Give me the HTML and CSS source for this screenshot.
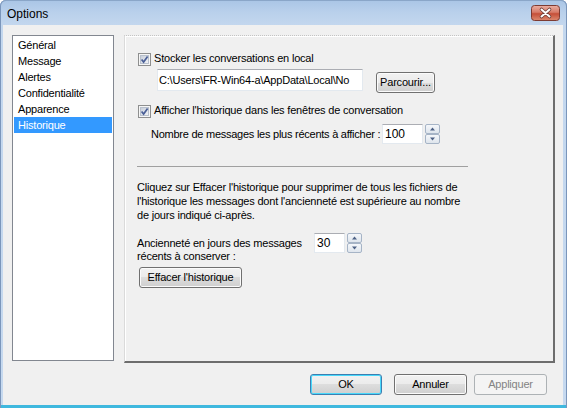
FILE: index.html
```html
<!DOCTYPE html>
<html>
<head>
<meta charset="utf-8">
<link rel="stylesheet" href="styles.css">
</head>
<body>
<div class="window">
  <div class="titlebar">
    <span class="title">Options</span>
    <span class="close">
      <svg width="29" height="16" viewBox="0 0 29 16">
        <defs>
          <linearGradient id="cg" x1="0" y1="0" x2="0" y2="1">
            <stop offset="0" stop-color="#eab0a4"/>
            <stop offset="0.45" stop-color="#d77b68"/>
            <stop offset="0.55" stop-color="#c54f38"/>
            <stop offset="1" stop-color="#dc8a70"/>
          </linearGradient>
        </defs>
        <rect x="0.5" y="0.5" width="28" height="15" rx="3" fill="url(#cg)" stroke="#7d3b32"/>
        <path d="M10.5 4.5 L18.5 11.5 M18.5 4.5 L10.5 11.5" stroke="#6a3a35" stroke-width="3.6" stroke-linecap="round"/>
        <path d="M10.5 4.5 L18.5 11.5 M18.5 4.5 L10.5 11.5" stroke="#ffffff" stroke-width="2" stroke-linecap="round"/>
      </svg>
    </span>
  </div>
  <div class="client">
    <div class="main">
      <ul class="list">
        <li>Général</li>
        <li>Message</li>
        <li>Alertes</li>
        <li>Confidentialité</li>
        <li>Apparence</li>
        <li class="sel">Historique</li>
      </ul>
      <div class="panel">
        <div class="chk-row first">
          <svg class="chk" width="13" height="13" viewBox="0 0 13 13">
            <defs>
              <linearGradient id="kg1" x1="0" y1="0" x2="1" y2="1">
                <stop offset="0" stop-color="#c6cdd8"/>
                <stop offset="1" stop-color="#f3f5f8"/>
              </linearGradient>
            </defs>
            <rect x="0.5" y="0.5" width="12" height="12" fill="#f6f6f6" stroke="#8e8f8f"/>
            <rect x="2.5" y="2.5" width="8" height="8" fill="url(#kg1)" stroke="#b8c0cc"/>
            <path d="M3.6 6.4 L5.6 9 L9.6 3.4" stroke="#4a5f97" stroke-width="1.7" fill="none"/>
          </svg>
          <span class="lbl">Stocker les conversations en local</span>
        </div>
        <div class="path-row">
          <div class="textbox path">C:\Users\FR-Win64-a\AppData\Local\No</div>
          <div class="btn browse">Parcourir...</div>
        </div>
        <div class="chk-row second">
          <svg class="chk" width="13" height="13" viewBox="0 0 13 13">
            <defs>
              <linearGradient id="kg2" x1="0" y1="0" x2="1" y2="1">
                <stop offset="0" stop-color="#c6cdd8"/>
                <stop offset="1" stop-color="#f3f5f8"/>
              </linearGradient>
            </defs>
            <rect x="0.5" y="0.5" width="12" height="12" fill="#f6f6f6" stroke="#8e8f8f"/>
            <rect x="2.5" y="2.5" width="8" height="8" fill="url(#kg2)" stroke="#b8c0cc"/>
            <path d="M3.6 6.4 L5.6 9 L9.6 3.4" stroke="#4a5f97" stroke-width="1.7" fill="none"/>
          </svg>
          <span class="lbl">Afficher l'historique dans les fenêtres de conversation</span>
        </div>
        <div class="count-row">
          <span class="count-lbl">Nombre de messages les plus récents à afficher :</span>
          <div class="textbox num wide">100</div>
          <svg class="spin" width="15" height="20" viewBox="0 0 15 20">
            <defs>
              <linearGradient id="sg1" x1="0" y1="0" x2="0" y2="1">
                <stop offset="0" stop-color="#f6f8fb"/>
                <stop offset="1" stop-color="#dde4ec"/>
              </linearGradient>
            </defs>
            <rect x="0.5" y="0.5" width="14" height="9" rx="1.5" fill="url(#sg1)" stroke="#a6b4c6"/>
            <rect x="0.5" y="10.5" width="14" height="9" rx="1.5" fill="url(#sg1)" stroke="#a6b4c6"/>
            <path d="M5 6.5 L7.5 3.5 L10 6.5 Z" fill="#4d6185"/>
            <path d="M5 13.5 L7.5 16.5 L10 13.5 Z" fill="#4d6185"/>
          </svg>
        </div>
        <div class="sep"></div>
        <p class="para">Cliquez sur Effacer l'historique pour supprimer de tous les fichiers de<br>l'historique les messages dont l'ancienneté est supérieure au nombre<br>de jours indiqué ci-après.</p>
        <div class="age-row">
          <span class="age-lbl">Ancienneté en jours des messages<br>récents à conserver :</span>
          <div class="textbox num narrow">30</div>
          <svg class="spin" width="15" height="20" viewBox="0 0 15 20">
            <defs>
              <linearGradient id="sg2" x1="0" y1="0" x2="0" y2="1">
                <stop offset="0" stop-color="#f6f8fb"/>
                <stop offset="1" stop-color="#dde4ec"/>
              </linearGradient>
            </defs>
            <rect x="0.5" y="0.5" width="14" height="9" rx="1.5" fill="url(#sg2)" stroke="#a6b4c6"/>
            <rect x="0.5" y="10.5" width="14" height="9" rx="1.5" fill="url(#sg2)" stroke="#a6b4c6"/>
            <path d="M5 6.5 L7.5 3.5 L10 6.5 Z" fill="#4d6185"/>
            <path d="M5 13.5 L7.5 16.5 L10 13.5 Z" fill="#4d6185"/>
          </svg>
        </div>
        <div class="btn clear">Effacer l'historique</div>
      </div>
    </div>
    <div class="buttons">
      <div class="btn ok">OK</div>
      <div class="btn cancel">Annuler</div>
      <div class="btn apply">Appliquer</div>
    </div>
  </div>
</div>
</body>
</html>
```

FILE: styles.css
```css
html, body {
  margin: 0;
  padding: 0;
  background: #ffffff;
}
body {
  font-family: "Liberation Sans", Arial, sans-serif;
  font-size: 11px;
  letter-spacing: -0.2px;
  color: #000;
}
.window {
  width: 567px;
  height: 408px;
  box-sizing: border-box;
  padding: 0 4px 3px 3px;
  display: flex;
  flex-direction: column;
  border-radius: 6px 6px 0 0;
  background: linear-gradient(to bottom, #a9c5e5 0px, #b9d0eb 12px, #c3d7ee 25px, #c6d9ef 100%);
  box-shadow: inset 1px 0 0 #7b96bb, inset -1px 0 0 #7b96bb, inset 0 1px 0 #8aa6c8, inset 0 -3px 0 #3fb8de;
}
.titlebar {
  height: 25px;
  display: flex;
  align-items: flex-start;
  justify-content: space-between;
  padding-left: 4px;
}
.title {
  font-size: 12px;
  letter-spacing: 0;
  line-height: 16px;
  margin-top: 6px;
  color: #000;
}
.close {
  margin-top: 5px;
  margin-right: 3px;
  height: 16px;
  display: block;
}
.close svg { display: block; }
.client {
  flex: 1;
  background: #f0f0f0;
  padding: 10px 8px 0 9px;
  display: flex;
  flex-direction: column;
}
.main {
  display: flex;
  align-items: flex-start;
  height: 328px;
}
.list {
  width: 102px;
  height: 326px;
  box-sizing: border-box;
  margin: 0;
  padding: 1px;
  list-style: none;
  background: #fff;
  border: 1px solid #828790;
}
.list li {
  height: 16px;
  line-height: 16px;
  padding-left: 4px;
  white-space: nowrap;
}
.list li.sel {
  background: #3399ff;
  color: #fff;
}
.panel {
  margin-left: 10px;
  width: 431px;
  height: 328px;
  box-sizing: border-box;
  border-top: 1px dotted #c4c4c4;
  border-left: 1px solid #dadada;
  border-right: 2px solid #6d6d6d;
  border-bottom: 2px solid #6d6d6d;
  box-shadow: inset 1px 1px 0 #ffffff;
  padding-left: 13px;
}
.chk-row {
  display: flex;
  align-items: center;
  height: 13px;
}
.chk-row.first { margin-top: 17px; }
.chk-row.second { margin-top: 12px; }
.chk { display: block; flex: none; }
.lbl {
  margin-left: 3px;
  line-height: 13px;
  white-space: nowrap;
  position: relative;
  top: -1px;
}
.path-row {
  display: flex;
  align-items: flex-start;
  margin-top: 3px;
  margin-left: 19px;
}
.textbox {
  box-sizing: border-box;
  background: #fff;
  border: 1px solid #e3e9ef;
  border-top-color: #abadb3;
  white-space: nowrap;
  overflow: hidden;
}
.textbox.path {
  width: 206px;
  height: 22px;
  line-height: 20px;
  padding-left: 1px;
}
.btn {
  box-sizing: border-box;
  height: 21px;
  line-height: 19px;
  text-align: center;
  border: 1px solid #707070;
  border-radius: 3px;
  background: linear-gradient(to bottom, #f2f2f2 0%, #ebebeb 50%, #dddddd 50%, #cfcfcf 100%);
  box-shadow: inset 0 0 0 1px #fbfbfb;
  white-space: nowrap;
}
.btn.browse {
  margin-left: 13px;
  margin-top: 3px;
  width: 59px;
}
.count-row {
  display: flex;
  align-items: center;
  margin-top: 6px;
  margin-left: 13px;
  height: 20px;
}
.count-lbl {
  flex: none;
  width: 231px;
  letter-spacing: -0.25px;
  white-space: nowrap;
}
.textbox.num {
  flex: none;
  height: 20px;
  line-height: 18px;
  padding-left: 2px;
  font-size: 12px;
  letter-spacing: 0;
}
.textbox.wide { width: 41px; }
.textbox.narrow { width: 31px; }
.spin {
  display: block;
  flex: none;
  margin-left: 2px;
}
.sep {
  margin-top: 22px;
  margin-left: -1px;
  width: 331px;
  border-top: 1px solid #a0a0a0;
}
.para {
  margin: 13px 0 0 -1px;
  line-height: 14px;
  white-space: nowrap;
}
.age-row {
  display: flex;
  align-items: flex-start;
  margin-top: 11px;
  margin-left: -1px;
}
.age-lbl {
  flex: none;
  width: 177px;
  padding-top: 4px;
  line-height: 13px;
  white-space: nowrap;
}
.btn.clear {
  margin-top: 4px;
  margin-left: 1px;
  width: 103px;
}
.buttons {
  display: flex;
  justify-content: flex-end;
  margin-top: 11px;
  padding-right: 8px;
}
.btn.ok {
  width: 72px;
  margin-right: 12px;
  border-color: #3c7fb1;
  box-shadow: inset 0 0 0 1px #48d8fb;
}
.btn.cancel {
  width: 73px;
  margin-right: 7px;
}
.btn.apply {
  width: 73px;
  color: #838383;
  border-color: #adb2b5;
  background: #f4f4f4;
  box-shadow: none;
}
```
